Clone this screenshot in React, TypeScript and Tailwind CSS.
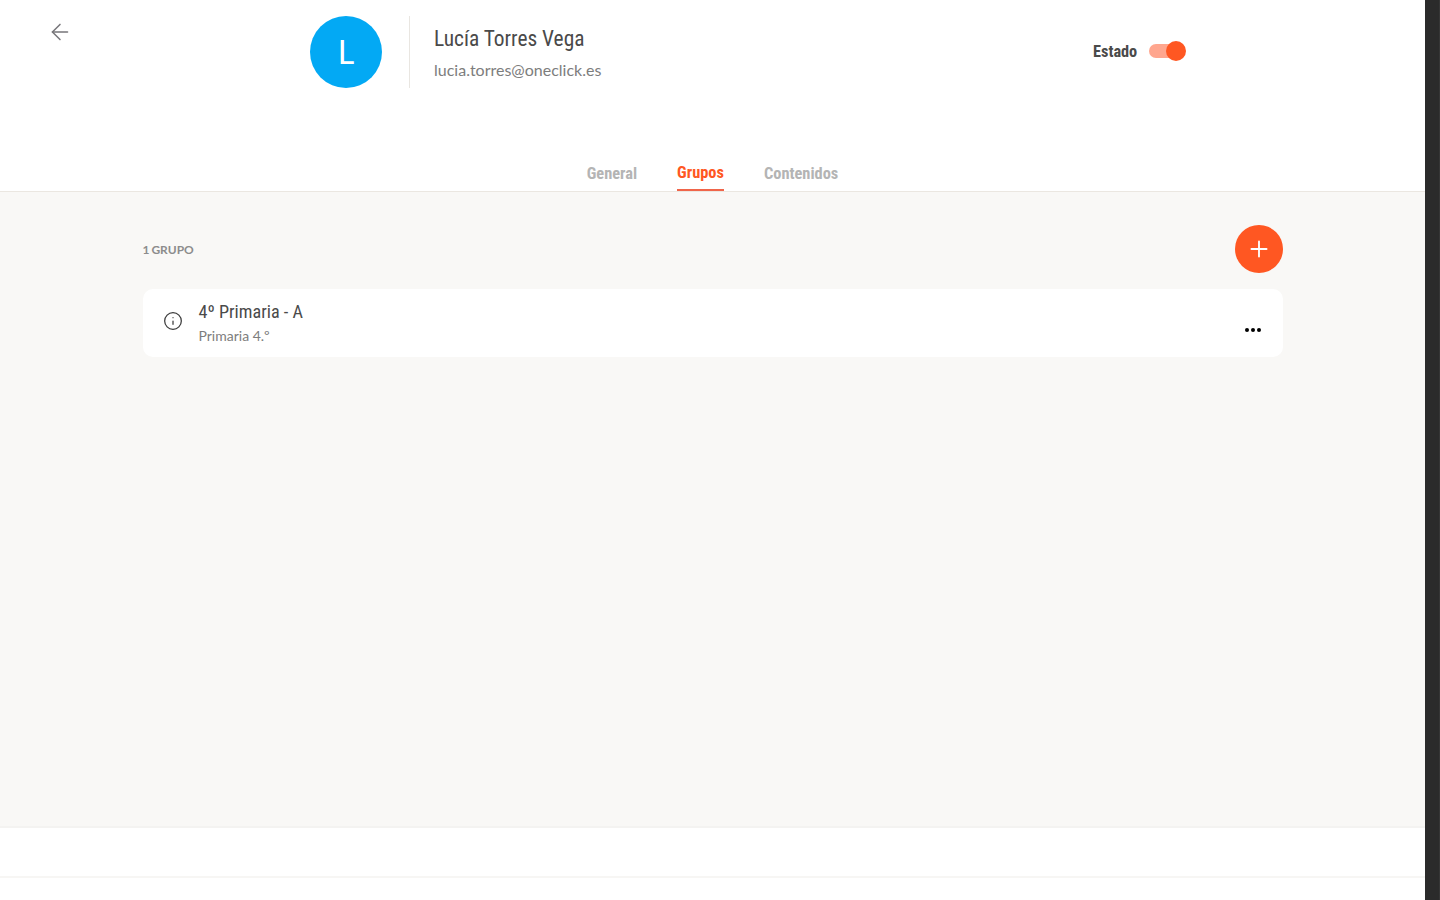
import { ArrowLeft, Info, Plus } from 'lucide-react'

const dosis = "font-['Liberation_Sans_Narrow','Roboto_Condensed','Liberation_Sans',sans-serif]"
const lato = "font-['Lato',sans-serif]"

const tabs = [
  { label: 'General', active: false },
  { label: 'Grupos', active: true },
  { label: 'Contenidos', active: false },
]

const App = () => {
  return (
    <div className={`flex h-[900px] w-full overflow-hidden bg-white ${lato}`}>
      <div className="flex w-[1425px] flex-col">
        <header className="flex h-[192px] flex-col border-b border-[#ebe7e1] bg-white">
          <div className="flex h-[150px] items-start pt-4">
            <button className="ml-[47px] mt-[3px] text-[#77767a]">
              <ArrowLeft size={26} strokeWidth={1.4} />
            </button>
            <div className="ml-[237px] flex h-[72px] w-[72px] items-center justify-center rounded-full bg-[#03a9f4] text-[32px] font-normal text-white">
              L
            </div>
            <div className="ml-[27px] h-[72px] w-px bg-[#e9e6e1]" />
            <div className="ml-6 w-[659px] pt-[7px]">
              <div className={`text-[21.4px] leading-[32px] text-[#4a4a4a] ${dosis}`}>Lucía Torres Vega</div>
              <div className="mt-[5px] text-[16px] leading-[20px] text-[#7d7d7d]">lucia.torres@oneclick.es</div>
            </div>
            <div className="mt-[23px] flex items-center">
              <span className={`mt-[2px] w-[45px] text-[16.3px] font-bold leading-[22px] text-[#4a4a4a] ${dosis}`}>Estado</span>
              <div className="relative ml-[11px] h-[14px] w-[37px]">
                <div className="h-[14px] w-[34px] rounded-full bg-[#ffa68e]" />
                <div className="absolute right-0 top-[-3px] h-5 w-5 rounded-full bg-[#ff5722]" />
              </div>
            </div>
          </div>
          <nav className="flex flex-1 justify-center gap-10">
            {tabs.map((tab) => (
              <div
                key={tab.label}
                className={`flex h-[41px] items-center border-b-2 text-[16.4px] font-bold ${dosis} ${
                  tab.active ? 'border-[#f0654a] pt-2 text-[#ff5722]' : 'border-transparent pt-[9px] text-[#b4b4b4]'
                }`}
              >
                {tab.label}
              </div>
            ))}
          </nav>
        </header>

        <main className="flex-1 bg-[#f9f8f6]">
          <div className="mx-auto w-[1140px] pt-[33px]">
            <div className="flex items-center justify-between">
              <span className="mt-px text-[12px] font-bold text-[#8c8c8c] [word-spacing:-1px]">1 GRUPO</span>
              <button className="flex h-12 w-12 items-center justify-center rounded-full bg-[#ff5722] text-white">
                <Plus size={26} strokeWidth={1.7} />
              </button>
            </div>
            <div className="mt-4 flex h-[68px] items-center rounded-[10px] bg-white pl-5 pr-[22px]">
              <Info size={20} strokeWidth={1.5} className="mb-[5px] text-[#3c3c3c]" />
              <div className="ml-4 flex-1">
                <div className={`text-[18.2px] leading-[24px] text-[#4a4a4a] ${dosis}`}>4º Primaria - A</div>
                <div className="mt-[2px] text-[14px] leading-[20px] text-[#7d7d7d]">Primaria 4.º</div>
              </div>
              <div className="mt-[14px] flex gap-[2.5px]">
                <span className="h-[3.5px] w-[3.5px] rounded-full bg-black" />
                <span className="h-[3.5px] w-[3.5px] rounded-full bg-black" />
                <span className="h-[3.5px] w-[3.5px] rounded-full bg-black" />
              </div>
            </div>
          </div>
        </main>

        <div className="h-[50px] border-t-2 border-[#f4f3f1] bg-white" />
        <div className="h-[24px] border-t-2 border-[#f7f6f4] bg-white" />
      </div>
      <div className="w-[15px] border-r border-[#363636] bg-[#2b2b2b]" />
    </div>
  )
}

export default App
